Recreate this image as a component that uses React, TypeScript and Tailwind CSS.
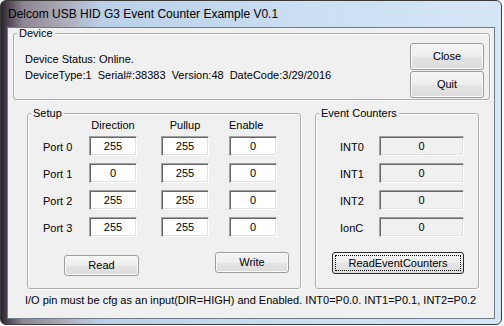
import React from 'react';

const ui = "font-['Liberation_Sans',Arial,sans-serif] text-[11px] text-black";

function Group({ title, className, children }: { title: string; className: string; children: React.ReactNode }) {
  return (
    <fieldset
      className={`rounded-[3px] border border-[#adadad] shadow-[inset_1px_1px_0_#ffffff,1px_1px_0_#ffffff] ${className}`}
    >
      <legend className="ml-[3px] bg-[#f0f0f0] px-[2px] leading-[10px]">{title}</legend>
      {children}
    </fieldset>
  );
}

function Box({ value, grey, className = '' }: { value: string; grey?: boolean; className?: string }) {
  return (
    <div
      className={`flex h-[20px] items-center justify-center border border-t-[#a0a0a0] border-l-[#a0a0a0] border-b-white border-r-white shadow-[inset_1px_1px_0_#696969,inset_-1px_-1px_0_#e3e3e3] leading-none ${
        grey ? 'bg-[#f0f0f0]' : 'bg-white'
      } ${className}`}
    >
      {value}
    </div>
  );
}

function Btn({ label, className = '' }: { label: string; className?: string }) {
  return (
    <button
      className={`flex items-center justify-center rounded-[3px] border border-[#9c9c9c] bg-[linear-gradient(to_bottom,#f5f5f5_0%,#eeeeee_50%,#e4e4e4_51%,#dcdcdc_100%)] shadow-[inset_0_0_0_1px_#fafafa] ${className}`}
    >
      {label}
    </button>
  );
}

const ports = [
  { name: 'Port 0', dir: '255', pull: '255', en: '0' },
  { name: 'Port 1', dir: '0', pull: '255', en: '0' },
  { name: 'Port 2', dir: '255', pull: '255', en: '0' },
  { name: 'Port 3', dir: '255', pull: '255', en: '0' },
];

const counters = ['INT0', 'INT1', 'INT2', 'IonC'];

export default function App() {
  return (
    <div className="h-[326px] w-[504px] bg-white">
      <div className="flex h-[325px] w-[502px] flex-col rounded-[6px] border border-[#3a3a3a] bg-[linear-gradient(to_right,#2a2230_0px,#4a404e_6px,#8d8692_22px,#aaa8b6_60px,#bad0e8_100px,#cadff3_300px,#d5e6f6_100%)] px-[6px]">
        <div className="flex h-[26px] items-center pl-[1px] font-['Liberation_Sans',Arial,sans-serif] text-[12px] text-black">
          Delcom USB HID G3 Event Counter Example V0.1
        </div>

        <div className={`h-[292px] w-[488px] border border-[#6f7b8a] bg-[#f0f0f0] pl-[5px] ${ui}`}>
          <Group title="Device" className="h-[72px] w-[477px]">
            <div className="flex">
              <div className="flex-1 pl-[11px] pt-[13px] leading-[16px]">
                <div>Device Status: Online.</div>
                <div className="[word-spacing:3px]">DeviceType:1 Serial#:38383 Version:48 DateCode:3/29/2016</div>
              </div>
              <div className="mr-[5px] mt-[5px] flex w-[74px] flex-col gap-[1px]">
                <Btn label="Close" className="h-[27px] w-[74px]" />
                <Btn label="Quit" className="h-[27px] w-[74px]" />
              </div>
            </div>
          </Group>

          <div className="mt-[8px] flex pl-[14px]">
            <Group title="Setup" className="h-[181px] w-[274px]">
              <div className="flex h-[14px] items-center leading-[14px]">
                <div className="w-[61px]" />
                <div className="w-[48px] text-center">Direction</div>
                <div className="ml-[24px] w-[48px] text-center">Pullup</div>
                <div className="ml-[20px] w-[48px] text-left">Enable</div>
              </div>
              <div className="mt-[4px] flex flex-col gap-[7px]">
                {ports.map((p) => (
                  <div key={p.name} className="flex items-center">
                    <div className="w-[61px] pl-[15px] pt-[3px]">{p.name}</div>
                    <Box value={p.dir} className="w-[48px]" />
                    <Box value={p.pull} className="ml-[24px] w-[48px]" />
                    <Box value={p.en} className="ml-[20px] w-[48px]" />
                  </div>
                ))}
              </div>
              <div className="flex items-start">
                <Btn label="Read" className="ml-[36px] mt-[18px] h-[21px] w-[75px]" />
                <Btn label="Write" className="ml-[76px] mt-[15px] h-[21px] w-[74px]" />
              </div>
            </Group>

            <Group title="Event Counters" className="ml-[14px] h-[181px] w-[164px]">
              <div className="h-[14px]" />
              <div className="mt-[4px] flex flex-col gap-[7px]">
                {counters.map((c) => (
                  <div key={c} className="flex items-center">
                    <div className="w-[63px] pl-[24px] pt-[3px]">{c}</div>
                    <Box value="0" grey className="w-[85px]" />
                  </div>
                ))}
              </div>
              <button className="ml-[16px] mt-[15px] flex h-[22px] w-[132px] rounded-[3px] border border-[#2b2b2b] bg-[linear-gradient(to_bottom,#f5f5f5_0%,#eeeeee_50%,#e4e4e4_51%,#dcdcdc_100%)] p-[2px]">
                <span className="flex h-full w-full items-center justify-center border border-dotted border-black">
                  ReadEventCounters
                </span>
              </button>
            </Group>
          </div>

          <div className="mt-[4px] pl-[12px] leading-[14px]">
            I/O pin must be cfg as an input(DIR=HIGH) and Enabled. INT0=P0.0. INT1=P0.1, INT2=P0.2
          </div>
        </div>
      </div>
    </div>
  );
}
